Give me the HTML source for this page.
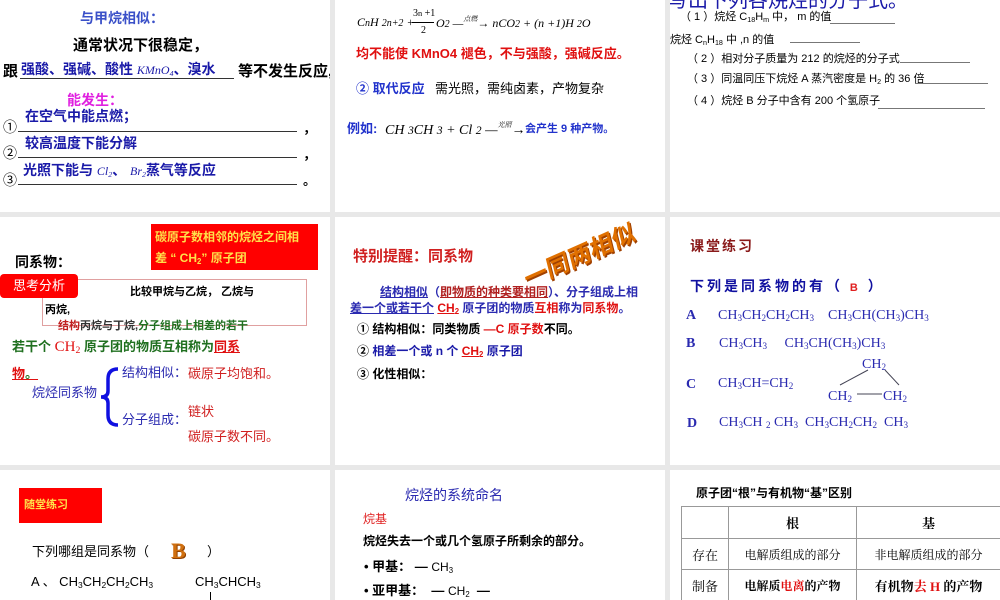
<!DOCTYPE html>
<html><head><meta charset="utf-8"><style>
*{margin:0;padding:0;box-sizing:border-box}
body{width:1000px;height:600px;background:#e8e8e8;position:relative;overflow:hidden;font-family:"Liberation Sans","Noto Sans CJK SC",sans-serif}
.s{position:absolute;background:#fff;overflow:hidden}
.t{position:absolute;white-space:nowrap;line-height:1}
.b{font-weight:bold}
.blue{color:#1a1aa8}
.red{color:#e01010}
.ser{font-family:"Liberation Serif","Noto Serif CJK SC",serif}
.ln{position:absolute;height:1px;background:#333}
sub{font-size:65%;vertical-align:-2px}
table{border-collapse:collapse}
td{border:1px solid #999;font-size:12px;text-align:center;font-family:"Liberation Serif","Noto Serif CJK SC",serif}
</style></head><body>

<!-- Slide 1 -->
<div class="s" style="left:0;top:0;width:330px;height:212px">
<div class="t b" style="left:80px;top:11px;font-size:14px;color:#3a50c8">与甲烷相似：</div>
<div class="t b" style="left:73px;top:38px;font-size:15px">通常状况下很稳定，</div>
<div class="t b" style="left:3px;top:64px;font-size:15px">跟</div>
<div class="t b blue" style="left:21px;top:62px;font-size:14px">强酸、强碱、酸性 <i class="ser" style="font-weight:normal;font-size:12px">KMnO<sub>4</sub></i>、溴水</div>
<div class="ln" style="left:20px;top:78px;width:214px"></div>
<div class="t b" style="left:238px;top:64px;font-size:15px">等不发生反应,</div>
<div class="t b" style="left:67px;top:93px;font-size:14px;color:#e020e0">能发生：</div>
<div class="t" style="left:3px;top:120px;font-size:14px">①</div>
<div class="t b blue" style="left:25px;top:109px;font-size:14px">在空气中能点燃；</div>
<div class="ln" style="left:18px;top:131px;width:279px"></div>
<div class="t b" style="left:303px;top:122px;font-size:13px">，</div>
<div class="t" style="left:3px;top:146px;font-size:14px">②</div>
<div class="t b blue" style="left:25px;top:136px;font-size:14px">较高温度下能分解</div>
<div class="ln" style="left:18px;top:157px;width:279px"></div>
<div class="t b" style="left:303px;top:148px;font-size:13px">，</div>
<div class="t" style="left:3px;top:173px;font-size:14px">③</div>
<div class="t b blue" style="left:23px;top:163px;font-size:14px">光照下能与 <i class="ser" style="font-weight:normal;font-size:12px">Cl<sub>2</sub></i>、 <i class="ser" style="font-weight:normal;font-size:12px">Br<sub>2</sub></i>蒸气等反应</div>
<div class="ln" style="left:18px;top:184px;width:279px"></div>
<div class="t b" style="left:303px;top:174px;font-size:13px">。</div>
</div>

<!-- Slide 2 -->
<div class="s" style="left:335px;top:0;width:330px;height:212px">
<div class="t ser" style="left:22px;top:16px;font-size:12px;font-style:italic">C<small>n</small>H <small>2n+2</small> +</div>
<div class="t ser" style="left:78px;top:9px;font-size:10px">3<small>n</small> +1</div>
<div class="ln" style="left:77px;top:22px;width:22px;background:#000"></div>
<div class="t ser" style="left:86px;top:26px;font-size:10px">2</div>
<div class="t ser" style="left:101px;top:16px;font-size:12px;font-style:italic">O<small>2</small> —<span style="font-size:7px;vertical-align:6px">点燃</span>→ nCO<small>2</small> + (n +1)H <small>2</small>O</div>
<div class="t b red" style="left:21px;top:47px;font-size:13px">均不能使 KMnO4 褪色，不与强酸，强碱反应。</div>
<div class="t b" style="left:21px;top:82px;font-size:13px;color:#2233cc">② 取代反应</div>
<div class="t" style="left:100px;top:82px;font-size:13px">需光照，需纯卤素，产物复杂</div>
<div class="t b" style="left:12px;top:122px;font-size:13px;color:#2233cc">例如:</div>
<div class="t ser" style="left:50px;top:122px;font-size:14px;font-style:italic">CH <small>3</small>CH <small>3</small> + Cl <small>2</small> —<span style="font-size:7px;vertical-align:7px">光照</span>→</div>
<div class="t b" style="left:190px;top:124px;font-size:11px;color:#2233cc">会产生 9 种产物。</div>
</div>

<!-- Slide 3 -->
<div class="s" style="left:670px;top:0;width:330px;height:212px">
<div class="t" style="left:-2px;top:-9px;font-size:20px;color:#1a1aa8">写出下列各烷烃的分子式。</div>
<div class="t" style="left:10px;top:12px;font-size:11px">（ 1 ）烷烃 C<sub>18</sub>H<sub>m</sub> 中， m 的值</div>
<div class="ln" style="left:160px;top:23px;width:65px;background:#777"></div>
<div class="t" style="left:0px;top:35px;font-size:11px">烷烃 C<sub>n</sub>H<sub>18</sub> 中 ,n 的值</div>
<div class="ln" style="left:120px;top:42px;width:70px;background:#777"></div>
<div class="t" style="left:17px;top:54px;font-size:11px">（ 2 ）相对分子质量为 212 的烷烃的分子式</div>
<div class="ln" style="left:230px;top:62px;width:70px;background:#777"></div>
<div class="t" style="left:17px;top:74px;font-size:11px">（ 3 ）同温同压下烷烃 A 蒸汽密度是 H<sub>2</sub> 的 36 倍</div>
<div class="ln" style="left:245px;top:83px;width:73px;background:#777"></div>
<div class="t" style="left:17px;top:96px;font-size:11px">（ 4 ）烷烃 B 分子中含有 200 个氢原子</div>
<div class="ln" style="left:208px;top:108px;width:107px;background:#777"></div>
</div>

<!-- Slide 4 -->
<div class="s" style="left:0;top:217px;width:330px;height:248px">
<div style="position:absolute;left:151px;top:7px;width:167px;height:46px;background:#f00"></div>
<div class="t b" style="left:155px;top:14px;font-size:12px;color:#ffe14a">碳原子数相邻的烷烃之间相</div>
<div class="t b" style="left:155px;top:35px;font-size:12px;color:#ffe14a">差 “ CH<sub>2</sub>” 原子团</div>
<div class="t b" style="left:15px;top:38px;font-size:14px">同系物：</div>
<div style="position:absolute;left:42px;top:62px;width:265px;height:47px;border:1px solid #e0a0a0"></div>
<div style="position:absolute;left:0;top:57px;width:78px;height:24px;background:#f00;border-radius:4px"></div>
<div class="t" style="left:13px;top:62px;font-size:13px;color:#fff">思考分析</div>
<div class="t b" style="left:130px;top:70px;font-size:11px">比较甲烷与乙烷， 乙烷与</div>
<div class="t b" style="left:45px;top:88px;font-size:11px">丙烷,</div>
<div class="t b" style="left:58px;top:104px;font-size:11px;color:#c02020">结构<span style="color:#333">丙烷与丁烷,</span><span style="color:#207020">分子组成上相差的若干</span></div>
<div class="t b" style="left:12px;top:123px;font-size:13px;color:#207020">若干个 <span class="ser red" style="font-weight:normal;font-size:15px">CH<sub>2</sub></span> 原子团的物质互相称为<span class="red" style="text-decoration:underline">同系</span></div>
<div class="t b red" style="left:12px;top:150px;font-size:13px;text-decoration:underline">物<span style="color:#207020;text-decoration:none">。</span></div>
<div class="t" style="left:32px;top:169px;font-size:13px;color:#2a2ab0">烷烃同系物</div>
<svg style="position:absolute;left:98px;top:150px" width="24" height="60"><path d="M20 2 Q10 2 10 12 L10 24 Q10 30 3 30 Q10 30 10 36 L10 48 Q10 58 20 58" fill="none" stroke="#1010e0" stroke-width="3.5"/></svg>
<div class="t" style="left:122px;top:149px;font-size:13px;color:#2a2ab0">结构相似：</div>
<div class="t" style="left:188px;top:150px;font-size:13px;color:#d02020">碳原子均饱和。</div>
<div class="t" style="left:188px;top:188px;font-size:13px;color:#d02020">链状</div>
<div class="t" style="left:122px;top:196px;font-size:13px;color:#2a2ab0">分子组成：</div>
<div class="t" style="left:188px;top:213px;font-size:13px;color:#d02020">碳原子数不同。</div>
</div>

<!-- Slide 5 -->
<div class="s" style="left:335px;top:217px;width:330px;height:248px">
<div class="t b" style="left:18px;top:32px;font-size:15px;color:#d02020">特别提醒：同系物</div>
<div class="t b" style="left:185px;top:28px;font-size:24px;color:#e07000;transform:rotate(-24deg) skewX(-10deg);text-shadow:1px 2px 0 #a04000">一同两相似</div>
<div class="t b" style="left:45px;top:69px;font-size:12px;color:#2a2ab0"><u>结构相似</u>（<u style="color:#b02020">即物质的种类要相同</u>）、分子组成上相</div>
<div class="t b" style="left:15px;top:85px;font-size:12px;color:#2a2ab0"><u>差一个或若干个</u> <u class="red">CH<sub>2</sub></u> 原子团的物质<span class="red">互相</span>称为<span class="red">同系物</span>。</div>
<div class="t b" style="left:22px;top:106px;font-size:12px">① 结构相似：同类物质 <span class="red">—C 原子数</span>不同。</div>
<div class="t b" style="left:22px;top:128px;font-size:12px"><span>②</span> <span class="blue">相差一个或 n 个 </span><u class="red">CH<sub>2</sub></u><span class="blue"> 原子团</span></div>
<div class="t b" style="left:22px;top:151px;font-size:12px">③ 化性相似：</div>
</div>

<!-- Slide 6 -->
<div class="s" style="left:670px;top:217px;width:330px;height:248px">
<div class="t b" style="left:20px;top:22px;font-size:14px;color:#8a1a1a;letter-spacing:2px">课堂练习</div>
<div class="t b" style="left:20px;top:62px;font-size:14px;color:#1010a0;letter-spacing:3px">下列是同系物的有（ <span style="color:#e02020;font-size:11px">B</span> ）</div>
<div class="t b ser" style="left:16px;top:92px;font-size:14px;color:#2a2ab0">A</div>
<div class="t ser" style="left:48px;top:92px;font-size:14px;color:#2a2ab0">CH<sub>3</sub>CH<sub>2</sub>CH<sub>2</sub>CH<sub>3</sub> &nbsp;&nbsp; CH<sub>3</sub>CH(CH<sub>3</sub>)CH<sub>3</sub></div>
<div class="t b ser" style="left:16px;top:120px;font-size:14px;color:#2a2ab0">B</div>
<div class="t ser" style="left:49px;top:120px;font-size:14px;color:#2a2ab0">CH<sub>3</sub>CH<sub>3</sub> &nbsp;&nbsp;&nbsp; CH<sub>3</sub>CH(CH<sub>3</sub>)CH<sub>3</sub></div>
<div class="t b ser" style="left:16px;top:161px;font-size:14px;color:#2a2ab0">C</div>
<div class="t ser" style="left:48px;top:160px;font-size:14px;color:#2a2ab0">CH<sub>3</sub>CH=CH<sub>2</sub></div>
<div class="t ser" style="left:192px;top:141px;font-size:14px;color:#2a2ab0">CH<sub>2</sub></div>
<div class="t ser" style="left:158px;top:173px;font-size:14px;color:#2a2ab0">CH<sub>2</sub></div>
<div class="t ser" style="left:213px;top:173px;font-size:14px;color:#2a2ab0">CH<sub>2</sub></div>
<svg style="position:absolute;left:0;top:0" width="330" height="248"><path d="M170 168 L198 153 M215 153 L229 168 M187 177 L212 177" stroke="#445" stroke-width="1" fill="none"/></svg>
<div class="t b ser" style="left:17px;top:200px;font-size:14px;color:#2a2ab0">D</div>
<div class="t ser" style="left:49px;top:199px;font-size:14px;color:#2a2ab0">CH<sub>3</sub>CH <sub>2</sub> CH<sub>3</sub> &nbsp;CH<sub>3</sub>CH<sub>2</sub>CH<sub>2</sub> &nbsp;CH<sub>3</sub></div>
</div>

<!-- Slide 7 -->
<div class="s" style="left:0;top:470px;width:330px;height:130px">
<div style="position:absolute;left:19px;top:18px;width:83px;height:35px;background:#f00"></div>
<div class="t b" style="left:24px;top:30px;font-size:11px;color:#ffe14a">随堂练习</div>
<div class="t" style="left:32px;top:75px;font-size:13px">下列哪组是同系物（</div>
<div class="t b ser" style="left:171px;top:70px;font-size:22px;color:#d07010;text-shadow:1px 1px 0 #904000">B</div>
<div class="t" style="left:207px;top:75px;font-size:13px">）</div>
<div class="t" style="left:31px;top:105px;font-size:13px">A 、 CH<sub>3</sub>CH<sub>2</sub>CH<sub>2</sub>CH<sub>3</sub></div>
<div class="t" style="left:195px;top:105px;font-size:13px">CH<sub>3</sub>CHCH<sub>3</sub></div>
<div style="position:absolute;left:210px;top:122px;width:1px;height:10px;background:#000"></div>
</div>

<!-- Slide 8 -->
<div class="s" style="left:335px;top:470px;width:330px;height:130px">
<div class="t" style="left:70px;top:18px;font-size:14px;color:#2a2ab0">烷烃的系统命名</div>
<div class="t" style="left:28px;top:43px;font-size:12px;color:#e02020">烷基</div>
<div class="t b" style="left:28px;top:65px;font-size:12px">烷烃失去一个或几个氢原子所剩余的部分。</div>
<div class="t b" style="left:29px;top:90px;font-size:13px">• 甲基： — <span style="font-weight:normal;font-size:12px">CH<sub>3</sub></span></div>
<div class="t b" style="left:29px;top:114px;font-size:13px">• 亚甲基： &nbsp;— <span style="font-weight:normal;font-size:12px">CH<sub>2</sub></span> &nbsp;—</div>
</div>

<!-- Slide 9 -->
<div class="s" style="left:670px;top:470px;width:330px;height:130px">
<div class="t b" style="left:26px;top:17px;font-size:12px">原子团“根”与有机物“基”区别</div>
<table style="position:absolute;left:11px;top:36px;width:320px">
<tr style="height:32px"><td style="width:47px"></td><td style="width:128px;font-weight:bold;font-size:13px">根</td><td style="font-weight:bold;font-size:13px">基</td></tr>
<tr style="height:31px"><td style="font-size:13px">存在</td><td>电解质组成的部分</td><td>非电解质组成的部分</td></tr>
<tr style="height:32px"><td style="font-size:13px">制备</td><td style="font-weight:bold">电解质<span class="red">电离</span>的产物</td><td style="font-weight:bold;font-size:13px">有机物<span class="red">去 H</span> 的产物</td></tr>
</table>
</div>
</body></html>
